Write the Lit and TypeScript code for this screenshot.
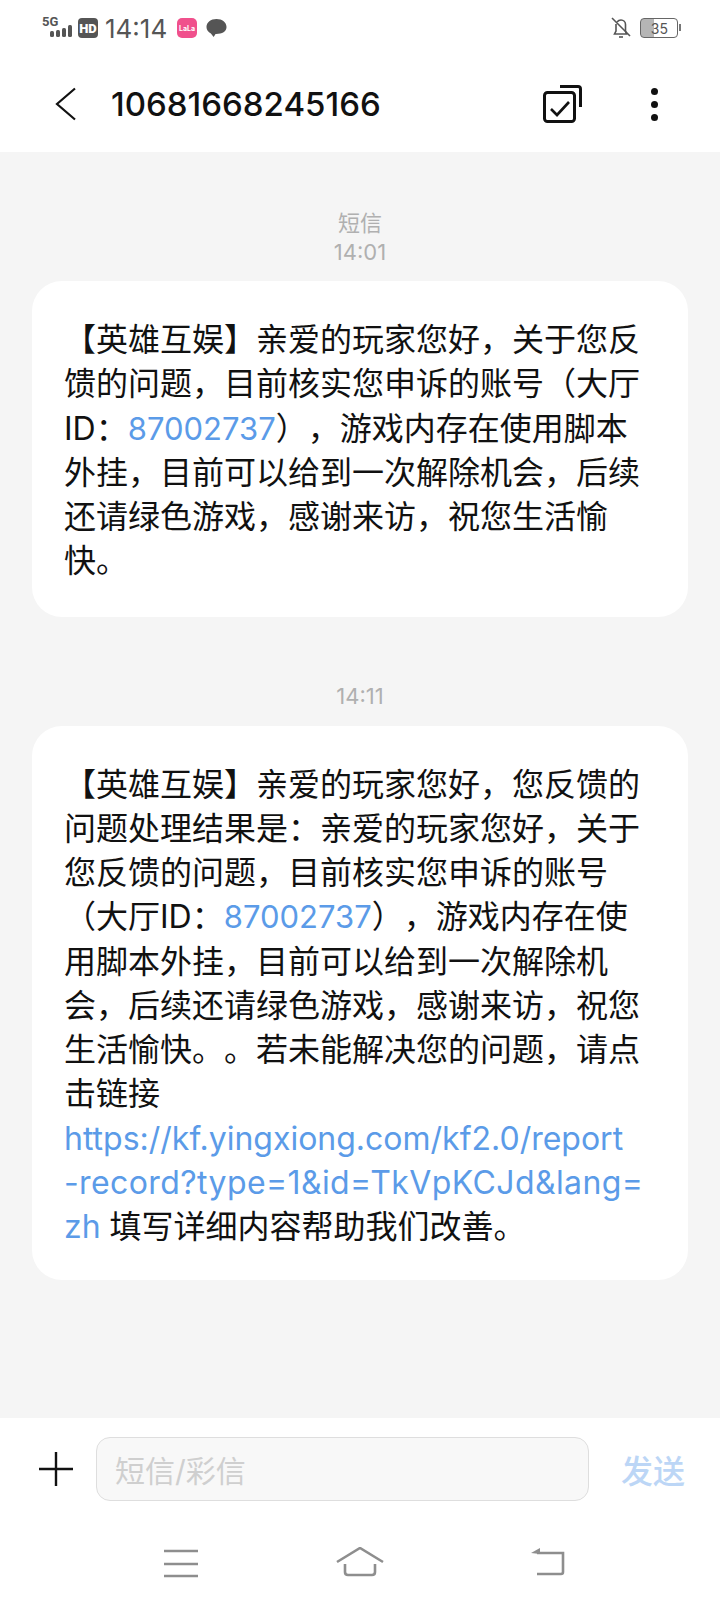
import { LitElement, html, css } from "lit";
import { customElement } from "lit/decorators.js";

@customElement("app-root")
export class AppRoot extends LitElement {
  static styles = css`
    :host {
      display: block;
      width: 720px;
      height: 1605px;
      font-family: Inter, "Noto Sans CJK SC", sans-serif;
      background: #f5f5f5;
      text-spacing-trim: space-all;
    }
    .page {
      height: 1605px;
      display: flex;
      flex-direction: column;
    }
    .top {
      background: #fff;
      height: 152px;
      flex: none;
    }
    .status {
      height: 56px;
      display: flex;
      align-items: center;
      padding: 0 0 0 42px;
      color: #555;
    }
    .time {
      font-size: 26px;
      margin: 0 9px 0 7px;
      width: 63px;
      white-space: nowrap;
    }
    .lala {
      width: 20px;
      height: 20px;
      border-radius: 5px;
      background: #f0508c;
      color: #fff;
      font-size: 7px;
      font-weight: 700;
      display: flex;
      align-items: center;
      justify-content: center;
      margin-right: 9px;
    }
    .status-right {
      margin-left: auto;
      display: flex;
      align-items: center;
      margin-right: 42px;
      gap: 9px;
    }
    .battery {
      position: relative;
      width: 38px;
      height: 20px;
      border: 1.5px solid #666;
      border-radius: 4px;
      box-sizing: border-box;
      font-size: 14px;
      color: #555;
      display: flex;
      align-items: center;
      justify-content: flex-end;
      padding-right: 9px;
      background: linear-gradient(90deg, #b5b5b5 37%, #fff 37%);
    }
    .battery::after {
      content: "";
      position: absolute;
      right: -4px;
      top: 5px;
      width: 2px;
      height: 7px;
      background: #777;
    }
    .bar {
      height: 96px;
      display: flex;
      align-items: center;
    }
    .back {
      margin-left: 54px;
      width: 24px;
    }
    .number {
      margin-left: 33px;
      font-size: 33px;
      font-weight: 500;
      color: #111;
    }
    .multi {
      margin-left: auto;
      margin-right: 69px;
    }
    .dots {
      margin-right: 61px;
      width: 8px;
      display: flex;
      flex-direction: column;
      gap: 6px;
    }
    .dots i {
      width: 7px;
      height: 7px;
      border-radius: 50%;
      background: #111;
    }
    .list {
      flex: 1;
      padding: 57px 32px 0;
      box-sizing: border-box;
    }
    .stamp {
      text-align: center;
      color: #b0b0b0;
      font-size: 22px;
      line-height: 29px;
    }
    .bubble {
      background: #fff;
      border-radius: 30px;
      margin-top: 14px;
      padding: 37px 32px 33px;
      font-size: 32px;
      line-height: 44.25px;
      color: #111;
    }
    .gap {
      margin-top: 65px;
    }
    .gap + .bubble {
      margin-top: 15px;
      padding-bottom: 31px;
    }
    .link {
      color: #5b9be8;
      font-size: 31px;
      line-height: 1;
    }
    .url {
      font-size: 32px;
    }
    .url-wide {
      letter-spacing: 0.4px;
    }
    .foot {
      background: #fff;
      height: 187px;
      flex: none;
    }
    .compose {
      height: 101px;
      display: flex;
      align-items: center;
    }
    .plus {
      margin-left: 39px;
      width: 34px;
    }
    .field {
      margin-left: 23px;
      width: 493px;
      height: 64px;
      box-sizing: border-box;
      border: 1.5px solid #dedede;
      border-radius: 14px;
      background: #f8f8f8;
      color: #cfcfcf;
      font-size: 30px;
      display: flex;
      align-items: center;
      padding-left: 18px;
    }
    .send {
      margin-left: 32px;
      color: #bcd6f6;
      font-size: 32px;
      font-weight: 500;
    }
    .nav {
      display: flex;
      height: 60px;
      align-items: flex-start;
      padding-top: 28px;
    }
  `;

  render() {
    return html`<div class="page">
      <div class="top">
        <div class="status">
          <svg width="34" height="40" viewBox="0 0 34 40">
            <text x="0" y="18" font-size="13" font-weight="700" font-family="Roboto" fill="#555">5G</text>
            <g fill="#555">
              <rect x="8" y="23" width="4" height="6" rx="1.500" />
              <rect x="14" y="22" width="4" height="7" rx="1.500" />
              <rect x="20" y="20" width="4" height="9" rx="1.500" />
              <rect x="26" y="17" width="4" height="12" rx="1.500" />
            </g>
          </svg>
          <svg width="20" height="20" viewBox="0 0 20 20" style="margin-left:2px">
            <rect width="20" height="20" rx="4" fill="#555" />
            <text x="10" y="14.500" text-anchor="middle" font-size="13" font-weight="900" font-family="Roboto" fill="#fff">HD</text>
          </svg>
          <span class="time">14:14</span>
          <span class="lala">LaLa</span>
          <svg width="21" height="20" viewBox="0 0 22 20">
            <path d="M11 0.500C5 .5 .5 4 .5 9c0 3 1.800 5.400 4.600 6.800L8 19.300l2-3C16.500 16.500 21.500 14 21.500 9 21.500 4 17 .5 11 .5z" fill="#555" />
          </svg>
          <div class="status-right">
            <svg width="20" height="22" viewBox="0 0 20 22" fill="none" stroke="#555" stroke-width="1.600">
              <path d="M5 7v7l-1.500 3h12L14.500 14V7.500C14.500 5 12.500 3 10 3 8.500 3 7 3.800 6 5" />
              <path d="M8 20h4" />
              <path d="M1 1l18 18" />
            </svg>
            <div class="battery">35</div>
          </div>
        </div>
        <div class="bar">
          <svg class="back" width="24" height="34" viewBox="0 0 24 34" fill="none" stroke="#111" stroke-width="2.200">
            <path d="M21 1.500L3 17l18 15.500" />
          </svg>
          <span class="number">10681668245166</span>
          <svg class="multi" width="39" height="38" viewBox="0 0 39 38" fill="none" stroke="#111">
            <rect x="1.500" y="7.500" width="30" height="29" rx="3" stroke-width="3" />
            <path d="M17 1.500h18c1.500 0 2.500 1 2.500 2.500v18" stroke-width="3" />
            <path d="M8 24l6 6 12-13" stroke-width="2.600" />
          </svg>
          <div class="dots"><i></i><i></i><i></i></div>
        </div>
      </div>

      <div class="list">
        <div class="stamp">短信<br />14:01</div>
        <div class="bubble">
          【英雄互娱】亲爱的玩家您好，关于您反<br />
          馈的问题，目前核实您申诉的账号（大厅<br />
          ID：<span class="link">87002737</span>），游戏内存在使用脚本<br />
          外挂，目前可以给到一次解除机会，后续<br />
          还请绿色游戏，感谢来访，祝您生活愉<br />
          快。
        </div>
        <div class="stamp gap">14:11</div>
        <div class="bubble">
          【英雄互娱】亲爱的玩家您好，您反馈的<br />
          问题处理结果是：亲爱的玩家您好，关于<br />
          您反馈的问题，目前核实您申诉的账号<br />
          （大厅ID：<span class="link">87002737</span>），游戏内存在使<br />
          用脚本外挂，目前可以给到一次解除机<br />
          会，后续还请绿色游戏，感谢来访，祝您<br />
          生活愉快。。若未能解决您的问题，请点<br />
          击链接<br />
          <span class="link url">https://kf.yingxiong.com/kf2.0/report<br />
          <span class="url-wide">-record?type=1&amp;id=TkVpKCJd&amp;lang=</span><br />
          zh</span> 填写详细内容帮助我们改善。
        </div>
      </div>

      <div class="foot">
        <div class="compose">
          <svg class="plus" width="34" height="34" viewBox="0 0 34 34" stroke="#111" stroke-width="2.400">
            <path d="M0 17h34M17 0v34" />
          </svg>
          <div class="field">短信/彩信</div>
          <span class="send">发送</span>
        </div>
        <div class="nav">
          <svg style="margin-left:164px" width="34" height="32" viewBox="0 0 34 32" stroke="#8e8e8e" stroke-width="2.600">
            <path d="M0 4h34M0 17h34M0 29h34" />
          </svg>
          <svg style="margin-left:138px" width="48" height="31" viewBox="0 0 48 31" fill="none" stroke="#8e8e8e" stroke-width="2.600">
            <path d="M1 15L24 1l23 14" />
            <path d="M9 17v8c0 2 1 3 3 3h24c2 0 3-1 3-3v-8" />
          </svg>
          <svg style="margin-left:147px" width="34" height="30" viewBox="0 0 34 30" fill="none" stroke="#8e8e8e" stroke-width="2.600">
            <path d="M6 6h26v19c0 2-1 2-2 2H6" />
            <path d="M0 6l9-5v6z" fill="#8e8e8e" stroke="none" />
          </svg>
        </div>
      </div>
    </div>`;
  }
}
